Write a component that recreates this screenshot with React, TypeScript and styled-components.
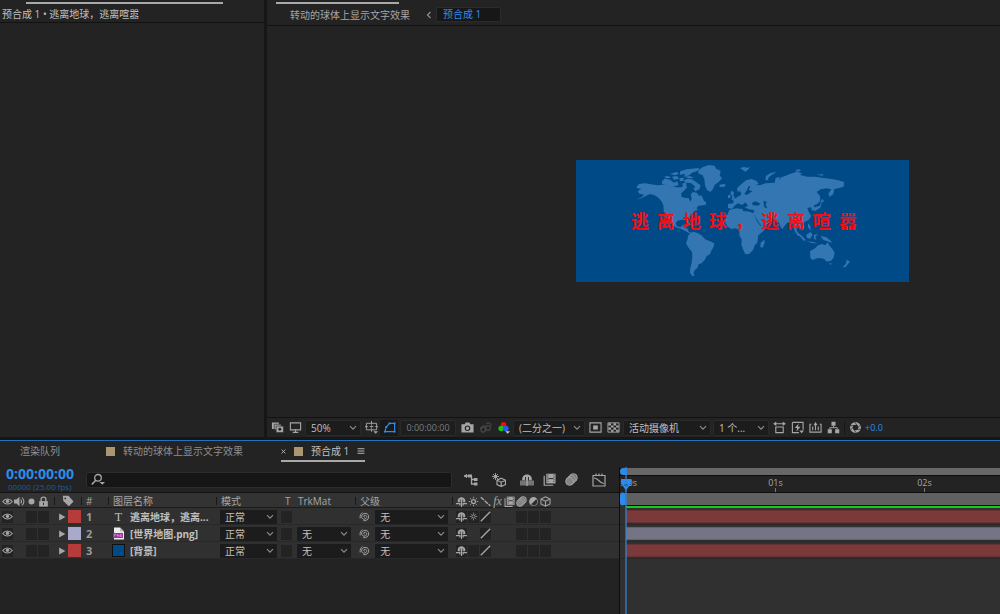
import React from "react";
import styled, { createGlobalStyle, css } from "styled-components";

const c = {
  gutter: "#161616",
  panel: "#232323",
  row: "#303030",
  header: "#333333",
  field: "#1c1c1c",
  line: "#121212",
  text: "#a6a6a6",
  bright: "#c0c0c0",
  dim: "#7d7d7d",
  blue: "#2d8ceb",
};

const Global = createGlobalStyle`
  *, *::before, *::after { box-sizing: border-box; }
  body {
    margin: 0;
    background: ${c.gutter};
    color: ${c.text};
    font: 10px/14px "Open Sans", "Noto Sans CJK SC", sans-serif;
  }
  button, input, select { font: inherit; color: inherit; margin: 0; }
`;

/* ---------- shell ---------- */

const Workspace = styled.div`
  display: flex;
  flex-direction: column;
  min-height: 100vh;
`;

const Upper = styled.div`
  display: flex;
  flex: 1;
  gap: 3px;
  min-height: 320px;
  padding-bottom: 3px;
`;

const Panel = styled.section<{ $width?: number }>`
  display: flex;
  flex-direction: column;
  min-width: 0;
  background: ${c.panel};
  ${(p) => (p.$width ? css`flex: 0 0 ${p.$width}px;` : css`flex: 1;`)}
`;

const Strip = styled.div<{ $start: number; $width: number }>`
  width: ${(p) => p.$width}px;
  height: 2px;
  margin: 2px 0 0 ${(p) => p.$start}px;
  background: #a9a9a9;
`;

const PanelTitle = styled.h2`
  margin: 0;
  padding: 3px 2px 1px;
  border-bottom: 1px solid ${c.line};
  color: ${c.bright};
  font-size: 10px;
  font-weight: 400;
  line-height: 14px;
`;

const Crumbs = styled.nav`
  display: flex;
  align-items: center;
  gap: 4px;
  height: 22px;
  padding: 0 23px;
  border-bottom: 1px solid ${c.line};
  font-size: 10px;
`;

const Crumb = styled.a<{ $current?: boolean }>`
  width: 132px;
  color: ${c.text};
  text-decoration: none;
  ${(p) =>
    p.$current &&
    css`
      width: 65px;
      padding: 0 6px;
      border: 1px solid #2b2b2b;
      border-radius: 2px;
      background: #171717;
      color: ${c.blue};
      line-height: 13px;
    `}
`;

/* ---------- composition viewer ---------- */

const Stage = styled.div`
  display: flex;
  flex: 1;
  align-items: center;
  justify-content: flex-end;
  padding: 0 91px 1px 0;
`;

const Comp = styled.div`
  display: grid;
  width: 333px;
  background: #004a87;
  > * { grid-area: 1 / 1; }
`;

const MapArt = styled.svg`
  display: block;
  width: 100%;
  fill: #3476b2;
`;

const Slogan = styled.p`
  display: flex;
  gap: 8px;
  align-self: center;
  margin: 0;
  padding: 0 0 2px 55px;
  color: #ee1218;
  font: 700 18px/20px "Noto Sans CJK SC", sans-serif;
`;

const ViewerBar = styled.div`
  display: flex;
  align-items: center;
  height: 20px;
  padding-left: 1px;
  border-top: 1px solid ${c.line};
`;

const ToolButton = styled.button<{ $tone?: "active" | "faint" }>`
  display: grid;
  place-items: center;
  flex: none;
  width: 18px;
  height: 16px;
  padding: 0;
  border: 0;
  border-radius: 2px;
  background: ${(p) => (p.$tone === "active" ? "#191919" : "none")};
  color: ${(p) => (p.$tone === "active" ? c.blue : p.$tone === "faint" ? "#474747" : c.text)};
`;

const TimeField = styled.button`
  width: 56px;
  height: 16px;
  margin: 0 2px;
  padding: 0;
  border: 1px solid #2a2a2a;
  border-radius: 2px;
  background: #1e1e1e;
  color: ${c.dim};
  font-size: 9px;
  line-height: 14px;
`;

const Exposure = styled.button`
  padding: 0 1px;
  border: 0;
  background: none;
  color: ${c.blue};
  font-size: 9px;
`;

const BarRule = styled.span`
  width: 1px;
  height: 14px;
  margin: 0 1px 0 2px;
  background: #171717;
`;

/* ---------- drop-downs ---------- */

const PickBox = styled.span<{ $width: number; $flat?: boolean }>`
  display: inline-grid;
  flex: none;
  align-items: center;
  width: ${(p) => p.$width}px;
  height: ${(p) => (p.$flat ? 14 : 16)}px;
  margin: ${(p) => (p.$flat ? 0 : "0 1px")};
  border: ${(p) => (p.$flat ? 0 : "1px solid #2a2a2a")};
  border-radius: ${(p) => (p.$flat ? 0 : 2)}px;
  background: ${c.field};
  vertical-align: top;
  > * { grid-area: 1 / 1; }
  svg { justify-self: end; margin-right: 3px; pointer-events: none; }
`;

const PickSelect = styled.select`
  width: 100%;
  height: 14px;
  padding: 0 12px 0 5px;
  border: 0;
  background: none;
  color: ${c.bright};
  font-size: 10px;
  line-height: 14px;
  appearance: none;
  outline: none;
  option { background: ${c.field}; }
`;

function Pick({ label, value, width, flat }: { label: string; value: string; width: number; flat?: boolean }) {
  return (
    <PickBox $width={width} $flat={flat}>
      <PickSelect aria-label={label} defaultValue={value}>
        <option>{value}</option>
      </PickSelect>
      <svg width="8" height="6" viewBox="0 0 8 6" fill="none" stroke="#8c8c8c" strokeWidth="1.2">
        <path d="M1 1.2 4 4.2 7 1.2" />
      </svg>
    </PickBox>
  );
}

/* ---------- icons ---------- */

const glyphs: Record<string, React.ReactNode> = {
  layers: (
    <>
      <path d="M1 1.500h7.500v3H4.500v4H1z" fill="currentColor" stroke="none" />
      <path d="M3.500 3.500h7.500v6h-7.500z" fill="currentColor" stroke="#232323" strokeWidth=".7" />
      <path d="M5.500 5.500h8v7h-8z" fill="currentColor" stroke="#232323" strokeWidth=".7" />
      <circle cx="9.500" cy="9" r="1.600" fill="#232323" stroke="none" />
    </>
  ),
  monitor: (
    <>
      <path d="M1.500 2h11v7.500h-11z" strokeWidth="1.200" />
      <path d="M7 9v2.500M4 12.200h6" strokeWidth="1.200" />
    </>
  ),
  guides: (
    <>
      <path d="M1.500 2.500h11v7h-11zM7 0v4M7 8v3.500M0 6h3M11 6h3M5 6h4M7 4.800v2.400" />
      <path d="M9 11h5L11.500 13.800z" fill="currentColor" stroke="none" />
    </>
  ),
  mask: (
    <>
      <path d="M2 11.500 3.500 6.500 7 2.500h5.500v9z" strokeWidth="1.200" />
      <path d="M1 10.500h2v2H1zM11.500 10.500h2v2h-2zM11.500 1.500h2v2h-2zM6 1.500h2v2H6zM2.500 5.500h2v2h-2z" fill="currentColor" stroke="none" />
    </>
  ),
  camera: (
    <>
      <path d="M.5 3.500h3.500l1-2h4l1 2h3.500v9H.5z" fill="currentColor" stroke="none" />
      <circle cx="7" cy="7.800" r="2.400" fill="none" stroke="#232323" strokeWidth="1.200" />
    </>
  ),
  snapshot: (
    <>
      <path d="M1.500 9C2 5.500 5 4.500 8 6M8 3c2-2 5-1 5 2" strokeWidth="1.300" />
      <circle cx="4.500" cy="9.500" r="2.500" strokeWidth="1.300" />
      <circle cx="9.800" cy="7.500" r="2.500" strokeWidth="1.300" />
    </>
  ),
  rgb: (
    <>
      <circle cx="7" cy="4" r="3" fill="#f20c0c" stroke="none" />
      <circle cx="4.500" cy="8" r="3" fill="#12c712" stroke="none" />
      <circle cx="9.500" cy="8" r="3" fill="#2a5cf5" stroke="none" />
      <path d="M9 11h5L11.500 13.800z" fill="#c8c8c8" stroke="none" />
    </>
  ),
  region: (
    <>
      <path d="M1 2h12v10H1z" strokeWidth="1.200" />
      <path d="M4.500 4.800h5v4.400h-5z" fill="currentColor" stroke="none" />
    </>
  ),
  checker: (
    <>
      <path d="M1 2h12v10H1z" />
      <path d="M1.500 2.500h2.800v2.300H1.500zM7 2.500h2.800v2.300H7zM4.300 4.800H7v2.300H4.300zM9.800 4.800h2.700v2.300H9.800zM1.500 7.100h2.800v2.300H1.500zM7 7.100h2.800v2.300H7zM4.300 9.400H7v2.300H4.300zM9.800 9.400h2.700v2.300H9.800z" fill="currentColor" stroke="none" />
    </>
  ),
  aspect: (
    <>
      <path d="M1 3h12M3 6.500h8v6H3z" strokeWidth="1.200" />
      <path d="M3.500.5v5L.3 3zM10.500.5v5L13.700 3z" fill="currentColor" stroke="none" />
    </>
  ),
  fast: (
    <>
      <path d="M1.500 1.500h11.500v8M8.500 12.500h-7v-11" strokeWidth="1.200" />
      <path d="M8.300 2.800 4 7.500h2.500L6 11.200 10.200 6.200H7.500zM9 10.300h5L11.500 13.200z" fill="currentColor" stroke="none" />
    </>
  ),
  chart: (
    <>
      <path d="M2.500 3.500H1v8.500h12V3.500h-1.500M4 6v4M10 6v4M7 2v8" strokeWidth="1.200" />
      <path d="M4.800 4.500 7 1 9.200 4.500z" fill="currentColor" stroke="none" />
    </>
  ),
  flow: (
    <>
      <path d="M4.800.8h4.400v4.400H4.800zM.8 8.800h4.400v4.400H.8zM8.800 8.800h4.400v4.400H8.800z" fill="currentColor" stroke="none" />
      <path d="M7 5v2.200M3 9V7.200h8V9" />
    </>
  ),
  aperture: (
    <>
      <circle cx="7" cy="7" r="4.400" strokeWidth="3" />
      <path d="M6 1 9 5M12.500 4 9 8M13 9H7.500M8 13 5 9M1.500 10 5 6M1 5h5.500" stroke="#232323" strokeWidth=".8" />
    </>
  ),
  eye: (
    <>
      <path d="M1 7C4 2.800 10 2.800 13 7 10 11.200 4 11.200 1 7z" strokeWidth="1.500" />
      <circle cx="7" cy="6.800" r="2.200" fill="currentColor" stroke="none" />
    </>
  ),
  speaker: (
    <>
      <path d="M0 4.500h3L7 1v12L3 9.500H0z" fill="currentColor" stroke="none" />
      <path d="M8.500 4.500c1.500 1.500 1.500 3.500 0 5M10 2c3.500 2.500 3.500 7.500 0 10" strokeWidth="1.300" />
    </>
  ),
  dot: <circle cx="7" cy="7" r="3.800" fill="currentColor" stroke="none" />,
  lock: (
    <>
      <path d="M1.500 6.500h11V13.500h-11z" fill="currentColor" stroke="none" />
      <path d="M4 7V4c0-3.400 6-3.400 6 0v3" strokeWidth="1.700" />
      <path d="M7 8.500v3" stroke="#333" strokeWidth="1.300" />
    </>
  ),
  tag: (
    <>
      <path d="M1 1h6.500l6 6.500-5.500 5.500L1.500 7z" fill="currentColor" stroke="none" />
      <circle cx="3.800" cy="4" r="1" fill="#333" stroke="none" />
    </>
  ),
  shy: (
    <>
      <path d="M2.200 8V6C2.200 0 11.800 0 11.800 6v2z" fill="currentColor" stroke="none" />
      <path d="M0 9.800h5V12M14 9.800h-5V12" strokeWidth="1.600" />
      <path d="M7 3v11" strokeWidth="1.400" />
      <path d="M5.500 4.500V9M8.500 4.500V9" stroke="#2c2c2c" strokeWidth=".9" />
    </>
  ),
  sun: (
    <>
      <circle cx="7" cy="7" r="2.500" strokeWidth="1.500" />
      <path d="M7 1v2M7 11v2M1 7h2M11 7h2M2.800 2.800l1.400 1.400M9.800 9.800l1.400 1.400M11.200 2.800 9.800 4.200M4.200 9.800l-1.400 1.400" strokeWidth="1.200" />
    </>
  ),
  backslash: <path d="M1 1.500 13 12.500" strokeWidth="1.800" strokeDasharray="5.500 1.200" />,
  slash: <path d="M1 13 13 1" strokeWidth="1.700" />,
  film: (
    <>
      <path d="M3.500.8H13.500v10.400H3.500z" fill="currentColor" stroke="none" />
      <path d="M1.300 3v10.200h9.700" strokeWidth="1.300" />
      <path d="M5.200 1.500v9M11.800 1.500v9" stroke="#333" strokeDasharray="1.300 1" />
      <path d="M6 6h5" stroke="#333" strokeWidth="1.200" />
    </>
  ),
  blur: (
    <>
      <circle cx="9" cy="5" r="4.300" fill="#777" />
      <circle cx="7" cy="7" r="4.300" fill="#777" />
      <circle cx="5" cy="9" r="4.300" fill="#858585" />
    </>
  ),
  half: (
    <>
      <circle cx="7" cy="7" r="5.600" fill="currentColor" stroke="none" />
      <path d="M4 10.500 10.500 4A4.600 4.600 0 0 1 4 10.500z" fill="#2c2c2c" stroke="none" />
    </>
  ),
  cube: <path d="M7 1 12.800 3.800v6.400L7 13 1.200 10.200V3.800zM1.200 3.800 7 6.500l5.800-2.700M7 6.500V13" strokeWidth="1.300" />,
  swirl: <path d="M7.500 7.500c-1.500.8-2.300-1.300-.5-2 2.500-.8 4 2.500 1.800 4.200C5.500 12 2 8.500 3.800 5.200 6 1.500 12.800 2.500 12.300 7.800 12 11 9 13 5.500 12.300M1.500 9.500C.8 6 2.500 3 4.500 2" strokeWidth="1.200" />,
  mini: (
    <>
      <path d="M0 3h7.500M7.500 3v8h3M7.500 6.500h3" strokeWidth="1.300" />
      <path d="M4 1.500h4v3H4zM10 5h3.500v3H10zM10 9.500h3.500v3H10zM0 3 3 .8v4.400z" fill="currentColor" stroke="none" />
    </>
  ),
  draft: (
    <>
      <path d="M9.200 5.200 13.500 7.200v4.300L9.200 13.500 5 11.500V7.200zM5 7.200 9.200 9.200l4.300-2M9.200 9.200v4.300" strokeWidth="1.200" />
      <path d="M3.500 0v7M0 3.500h7M1 1l5 5M6 1 1 6" strokeWidth=".9" />
      <circle cx="3.500" cy="3.500" r="1.700" fill="currentColor" stroke="none" />
    </>
  ),
  hideShy: (
    <>
      <path d="M2.200 7.500V6C2.200 0 11.800 0 11.800 6v1.500z" fill="currentColor" stroke="none" />
      <path d="M0 7.500h14v5H0z" fill="#747474" stroke="none" />
      <path d="M7 3v10" strokeWidth="1.400" />
      <path d="M5.500 4v3.500M8.500 4v3.500" stroke="#232323" strokeWidth=".9" />
    </>
  ),
  graph: (
    <>
      <path d="M1 2.500h12v10.500H1z" strokeWidth="1.200" />
      <path d="M2 5c5 0 5 5.500 10 5.500M4 .5v2M7 .5v2M10 .5v2" strokeWidth="1.200" />
    </>
  ),
  menu: <path d="M1 3h12M1 7h12M1 11h12" strokeWidth="1.600" />,
  close: <path d="M1.500 1.500 12.500 12.500M12.500 1.500 1.500 12.500" strokeWidth="2.400" />,
  search: (
    <>
      <circle cx="7" cy="4.800" r="3.300" strokeWidth="1.300" />
      <path d="M4.800 7.200.8 11.500" strokeWidth="1.600" />
      <path d="M8.500 9h5.500l-2.700 2.800z" fill="currentColor" stroke="none" />
    </>
  ),
  triangle: <path d="M2 1v12L13 7z" fill="currentColor" stroke="none" />,
};

function Icon({ name, size = 13 }: { name: string; size?: number }) {
  return (
    <svg width={size} height={size} viewBox="0 0 14 14" fill="none" stroke="currentColor" strokeWidth="1" aria-hidden="true">
      {glyphs[name]}
    </svg>
  );
}

/* ---------- timeline ---------- */

const Timeline = styled.section`
  display: flex;
  flex-direction: column;
  flex: none;
  border-top: 1px solid #2272bf;
  background: ${c.panel};
`;

const Tabs = styled.div`
  display: flex;
  align-items: flex-start;
  height: 26px;
  padding-left: 20px;
`;

const Tab = styled.button<{ $active?: boolean; $gap?: number }>`
  display: flex;
  align-items: center;
  gap: 8px;
  height: 21px;
  margin-left: ${(p) => p.$gap || 0}px;
  padding: 1px 0 0;
  border: 0;
  border-bottom: 2px solid ${(p) => (p.$active ? "#a9a9a9" : "transparent")};
  background: none;
  color: ${(p) => (p.$active ? c.bright : "#8f8f8f")};
`;

const Chip = styled.span`
  width: 9px;
  height: 9px;
  background: #ab9674;
`;

const Body = styled.div`
  display: flex;
  align-items: stretch;
`;

const LayerSide = styled.div`
  flex: 0 0 620px;
  border-right: 1px solid #0e0e0e;
`;

const Tools = styled.div`
  display: flex;
  align-items: center;
  height: 26px;
  padding-left: 6px;
  border-bottom: 1px solid ${c.line};
`;

const Clock = styled.div`
  width: 80px;
  padding-bottom: 2px;
  color: ${c.blue};
  font-size: 14px;
  font-weight: 700;
  line-height: 15px;
  white-space: nowrap;
  small {
    display: block;
    padding-left: 2px;
    color: #1d5c9b;
    font-size: 8px;
    font-weight: 400;
    line-height: 11px;
  }
`;

const Search = styled.label`
  display: flex;
  align-items: center;
  gap: 4px;
  width: 366px;
  height: 16px;
  padding-left: 4px;
  border: 1px solid #2b2b2b;
  border-radius: 2px;
  background: #161616;
  input {
    flex: 1;
    min-width: 0;
    padding: 0;
    border: 0;
    outline: 0;
    background: none;
  }
`;

const ToolSet = styled.div`
  display: flex;
  align-items: center;
  gap: 10px;
  padding-left: 10px;
`;

const ToolGroup = styled.div`
  display: flex;
  gap: 4px;
`;

const Grid = styled.table`
  width: 619px;
  border-collapse: collapse;
  table-layout: fixed;
`;

const Head = styled.th<{ $rule?: boolean }>`
  height: 15px;
  padding: 0;
  background: ${c.header};
  color: ${c.text};
  font-size: 10px;
  font-weight: 400;
  line-height: 14px;
  text-align: left;
  white-space: nowrap;
  box-shadow: inset 0 -1px #1b1b1b;
  > div {
    display: flex;
    align-items: center;
    height: 15px;
    padding: 1px 0 0 5px;
    background: ${(p) => (p.$rule ? "linear-gradient(#181818, #181818) 0 4px / 1px 8px no-repeat" : "none")};
  }
`;

const Cell = styled.td`
  height: 17px;
  padding: 0;
  background: ${c.row};
  box-shadow: inset 0 -1px #282828;
  > div {
    display: flex;
    align-items: center;
    height: 17px;
    padding-left: 4px;
    white-space: nowrap;
  }
`;

const Slots = styled.div<{ $start: number }>`
  && { padding-left: ${(p) => p.$start}px; }
`;

const Slot = styled.button<{ $well?: boolean }>`
  display: grid;
  place-items: center;
  width: 12px;
  height: 12px;
  padding: 0;
  border: 0;
  border-right: 1px solid transparent;
  background: ${(p) => (p.$well ? "#232323" : "none")};
  background-clip: padding-box;
  color: ${c.text};
`;

const LabelWell = styled.div`
  && { gap: 2px; }
`;

const Swatch = styled.span<{ $color: string; $outlined?: boolean }>`
  flex: none;
  width: 13px;
  height: 13px;
  border: 1px solid ${(p) => (p.$outlined ? "#111" : p.$color)};
  background: ${(p) => p.$color};
`;

const Num = styled.b`
  padding-left: 1px;
  color: #9a9a9a;
  font-size: 11px;
`;

const Name = styled.b`
  overflow: hidden;
  color: ${c.bright};
  font-size: 10px;
`;

const TypeMark = styled.span`
  display: grid;
  place-items: center;
  flex: none;
  width: 13px;
  margin-right: 5px;
  color: ${c.bright};
  font: 12px/14px "Liberation Serif", serif;
`;

const Fx = styled.i`
  font: italic 12px/12px "Liberation Serif", serif;
`;

/* ---------- time side ---------- */

const TimeSide = styled.div`
  position: relative;
  flex: 1;
  min-width: 0;
  min-height: 147px;
  overflow: hidden;
  background: ${c.row};
`;

const Navigator = styled.div`
  height: 9px;
  padding-top: 1px;
  border-bottom: 1px solid #0e0e0e;
  background: ${c.panel};
`;

const NavBar = styled.div`
  height: 7px;
  border-left: 7px solid ${c.blue};
  border-radius: 4px 0 0 4px;
  background: #686868;
`;

const Ruler = styled.ol`
  display: flex;
  height: 16px;
  margin: 0;
  padding: 0;
  background: ${c.panel};
  list-style: none;
`;

const Mark = styled.li<{ $first?: boolean }>`
  flex: 0 0 ${(p) => (p.$first ? 81 : 149)}px;
  font-size: 9px;
  line-height: 13px;
  text-align: ${(p) => (p.$first ? "left" : "center")};
  background: ${(p) => (p.$first ? "none" : "linear-gradient(#777, #777) 50% 100% / 1px 4px no-repeat")};
`;

const WorkArea = styled.div`
  height: 14px;
  border-top: 1px solid #0e0e0e;
  border-bottom: 1px solid #0e0e0e;
  border-left: 5px solid ${c.blue};
  border-radius: 4px 0 0 4px;
  background: #606060;
`;

const Cached = styled.div`
  height: 2px;
  margin-left: 6px;
  background: #14c81e;
`;

const Track = styled.div`
  height: 17px;
  padding: 2px 0 1px 6px;
  border-bottom: 1px solid #282828;
`;

const Clip = styled.div<{ $color: string }>`
  height: 13px;
  border: solid rgba(0, 0, 0, 0.15);
  border-width: 1px 0;
  background: ${(p) => p.$color};
`;

const Playhead = styled.svg`
  position: absolute;
  top: 0;
  left: 0;
  width: 12px;
  height: 100%;
`;

type Layer = {
  name: string;
  kind: "text" | "png" | "solid";
  label: string;
  clip: string;
  matte: boolean;
  sun: "icon" | "none" | "well";
};

const layers: Layer[] = [
  { name: "逃离地球，逃离...", kind: "text", label: "#b63b3b", clip: "#7b3a3a", matte: false, sun: "icon" },
  { name: "[世界地图.png]", kind: "png", label: "#a9a9cc", clip: "#747484", matte: true, sun: "none" },
  { name: "[背景]", kind: "solid", label: "#b63b3b", clip: "#7b3a3a", matte: true, sun: "well" },
];

function LayerMark({ kind }: { kind: Layer["kind"] }) {
  if (kind === "text") return <TypeMark>T</TypeMark>;
  if (kind === "solid")
    return (
      <TypeMark>
        <Swatch $color="#004a87" $outlined />
      </TypeMark>
    );
  return (
    <TypeMark>
      <svg width="13" height="13" viewBox="0 0 13 13" aria-hidden="true">
        <path d="M2 0.500h6l4 4v8H2z" fill="#eee" />
        <path d="M8 .5v4h4z" fill="#bbb" />
        <path d="M1 6h10v5H1z" fill="#9c2b9c" />
        <path d="M2.500 9.500v-2h1.500v1M5.500 9.500v-2l1.500 2v-2M9.800 7.500H8.500v2h1.300v-1" stroke="#e3b6e3" strokeWidth=".6" fill="none" />
      </svg>
    </TypeMark>
  );
}

const headSwitches = ["shy", "sun", "backslash", "fx", "film", "blur", "half", "cube"];

function LayerTable() {
  return (
    <Grid>
      <colgroup>
        {[54, 27, 27, 108, 64, 13, 62, 97, 167].map((w, i) => (
          <col key={i} width={w} />
        ))}
      </colgroup>
      <thead>
        <tr>
          <Head>
            <Slots $start={2}>
              {["eye", "speaker", "dot", "lock"].map((n) => (
                <Slot key={n} aria-label={n}>
                  <Icon name={n} size={11} />
                </Slot>
              ))}
            </Slots>
          </Head>
          <Head $rule>
            <div>
              <ToolButton as="span">
                <Icon name="tag" size={12} />
              </ToolButton>
            </div>
          </Head>
          <Head $rule><div>#</div></Head>
          <Head $rule><div>图层名称</div></Head>
          <Head $rule><div>模式</div></Head>
          <Head><div>T</div></Head>
          <Head><div>TrkMat</div></Head>
          <Head $rule><div>父级</div></Head>
          <Head $rule>
            <Slots $start={4}>
              {headSwitches.map((n) => (
                <Slot key={n} aria-label={n}>
                  {n === "fx" ? <Fx>fx</Fx> : <Icon name={n} size={11} />}
                </Slot>
              ))}
            </Slots>
          </Head>
        </tr>
      </thead>
      <tbody>
        {layers.map((l, i) => (
          <tr key={l.name}>
            <Cell>
              <Slots $start={2}>
                <Slot $well aria-label="可见"><Icon name="eye" size={11} /></Slot>
                <Slot aria-label="音频" />
                <Slot $well aria-label="独奏" />
                <Slot $well aria-label="锁定" />
              </Slots>
            </Cell>
            <Cell>
              <LabelWell>
                <Icon name="triangle" size={8} />
                <Swatch $color={l.label} />
              </LabelWell>
            </Cell>
            <Cell><div><Num>{i + 1}</Num></div></Cell>
            <Cell>
              <div>
                <LayerMark kind={l.kind} />
                <Name>{l.name}</Name>
              </div>
            </Cell>
            <Cell><div><Pick flat label="模式" value="正常" width={57} /></div></Cell>
            <Cell><Slots $start={1}><Slot $well aria-label="保留透明度" /></Slots></Cell>
            <Cell><div>{l.matte && <Pick flat label="轨道遮罩" value="无" width={54} />}</div></Cell>
            <Cell>
              <div>
                <Icon name="swirl" size={11} />
                <span>&nbsp;&nbsp;</span>
                <Pick flat label="父级" value="无" width={73} />
              </div>
            </Cell>
            <Cell>
              <Slots $start={4}>
                <Slot $well aria-label="消隐"><Icon name="shy" size={11} /></Slot>
                <Slot $well={l.sun !== "none"} aria-label="折叠变换">
                  {l.sun === "icon" && <Icon name="sun" size={9} />}
                </Slot>
                <Slot $well aria-label="质量"><Icon name="slash" size={11} /></Slot>
                <Slot aria-label="效果" />
                <Slot aria-label="帧混合开关" />
                <Slot $well aria-label="运动模糊" />
                <Slot $well aria-label="调整图层" />
                <Slot $well aria-label="3D 图层" />
              </Slots>
            </Cell>
          </tr>
        ))}
      </tbody>
    </Grid>
  );
}

/* ---------- world map ---------- */

function WorldMap() {
  return (
    <MapArt viewBox="18 16 999 366" role="img" aria-label="世界地图">
      <path d="M200 96 207 88 225 86 238 88 262 92 280 90 300 94 318 98 335 98 343 88 352 98 342 108 334 116 334 126 346 130 356 130 361 141 365 132 362 120 368 112 380 114 388 124 394 122 403 140 408 150 398 152 386 153 379 160 384 165 372 170 366 180 358 188 354 194 357 207 351 207 345 196 334 195 322 199 317 206 321 215 331 218 338 211 348 208 345 219 353 222 356 231 363 233 358 236 346 229 332 222 318 218 306 209 299 194 291 182 295 197 288 188 281 170 280 152 276 142 266 130 254 122 240 118 229 123 214 131 199 135 216 127 222 120 208 117 203 109 214 103 200 100z" />
      <path d="M362 234 371 231 384 236 396 243 405 254 420 260 433 266 431 276 424 288 420 299 410 304 404 316 395 326 386 329 382 340 375 345 370 355 374 363 367 364 360 354 361 340 365 324 367 306 366 292 356 280 348 266 353 252 355 242z" />
      <path d="M386 46 399 37 416 31 434 33 439 43 452 48 449 62 456 71 446 82 434 91 429 103 421 112 411 106 405 92 403 74 398 62 384 56z" />
      <path d="M276 80 284 72 300 75 312 84 322 80 326 91 310 96 292 93 276 88zM282 66 296 64 302 70 288 71zM306 66 322 64 326 72 312 75zM330 50 350 44 388 40 384 48 366 54 358 62 342 66 346 58 330 60zM328 70 342 69 340 78 330 80zM340 78 352 72 366 74 378 82 392 92 388 104 376 110 370 102 376 96 364 86 350 84zM300 58 318 52 328 56 316 62zM344 66 360 64 372 70 356 71zM336 88 348 82 350 92 342 96zM400 140 408 141 408 149 398 147z" />
      <path d="M448 90 464 88 468 93 458 98 449 96zM510 40 522 37 532 39 540 38 534 45 526 51 518 46zM485 108 492 113 490 122 495 130 484 134 487 125 481 116zM474 122 482 120 481 129 474 131z" />
      <path fillRule="evenodd" d="M474 148 490 146 491 138 484 134 496 131 506 125 514 120 512 110 503 111 501 101 512 90 528 77 545 73 560 79 566 88 556 92 572 91 586 86 600 85 614 84 617 70 630 66 626 76 634 68 645 64 662 57 680 51 696 56 690 61 712 66 735 66 760 70 785 73 805 77 822 82 821 96 808 100 793 103 790 118 779 127 775 117 784 104 770 101 752 104 740 112 750 124 751 138 742 148 732 152 733 166 726 168 724 158 712 160 716 172 724 184 716 196 702 203 696 205 703 218 694 227 685 217 680 214 680 228 690 243 684 244 674 229 670 212 660 202 650 206 641 217 637 224 630 214 625 199 616 193 600 190 606 196 592 209 576 217 568 206 558 190 550 176 553 166 536 164 524 158 534 154 526 143 517 151 503 146 493 154 486 163 474 160zM546 144 556 140 572 147 564 153 548 152zM580 138 590 141 587 150 592 161 583 158zM529 110 536 94 541 95 536 106 548 110 540 114 532 120 522 119z" />
      <path d="M478 166 498 161 517 163 520 170 532 170 550 175 560 198 571 214 588 214 581 228 565 242 562 264 554 272 549 287 537 298 526 299 520 286 514 270 515 254 508 242 508 230 498 221 484 223 473 216 466 204 468 190zM572 264 583 255 584 264 578 279 571 277z" />
      <path d="M720 290 736 280 742 273 755 268 766 272 773 263 779 274 788 284 794 294 791 309 783 318 770 321 762 312 744 310 728 316 721 310zM778 325 785 326 781 332zM830 315 840 321 834 328 826 338 818 337 828 327z" />
      <path d="M682 232 696 244 708 257 701 258 688 243zM709 240 722 232 728 240 720 252 711 250zM708 260 730 262 742 266 728 266zM732 240 744 239 736 246 739 256 732 252zM752 244 768 247 782 258 786 265 772 260 760 256zM714 206 721 214 722 228 714 218zM727 163 735 170 752 158 755 143 763 140 756 133 752 142 750 153 734 158zM730 178 736 182 730 186zM586 76 588 64 602 55 620 52 606 60 596 68 594 77zM676 46 690 44 692 49 680 51zM740 60 760 58 758 63zM344 202 362 207 374 213 363 212z" />
    </MapArt>
  );
}

const TITLE = "逃离地球，逃离喧嚣";

export default function App() {
  return (
    <Workspace>
      <Global />
      <Upper>
        <Panel $width={264}>
          <Strip $start={26} $width={197} />
          <PanelTitle>预合成 1 • {TITLE}</PanelTitle>
        </Panel>
        <Panel>
          <Strip $start={9} $width={123} />
          <Crumbs>
            <Crumb href="#main">转动的球体上显示文字效果</Crumb>
            <svg width="6" height="8" viewBox="0 0 6 8" fill="none" stroke="#8f8f8f" strokeWidth="1.2">
              <path d="M4.500 1 1.500 4 4.500 7" />
            </svg>
            <Crumb href="#pre" $current>预合成 1</Crumb>
          </Crumbs>
          <Stage>
            <Comp>
              <WorldMap />
              <Slogan>
                {TITLE.split("").map((ch, i) => (
                  <span key={i}>{ch}</span>
                ))}
              </Slogan>
            </Comp>
          </Stage>
          <ViewerBar>
            <ToolButton aria-label="始终预览"><Icon name="layers" /></ToolButton>
            <ToolButton aria-label="主查看器"><Icon name="monitor" /></ToolButton>
            <Pick label="放大率" value="50%" width={56} />
            <ToolButton aria-label="网格和参考线"><Icon name="guides" /></ToolButton>
            <ToolButton aria-label="蒙版可见性" $tone="active"><Icon name="mask" /></ToolButton>
            <TimeField>0:00:00:00</TimeField>
            <ToolButton aria-label="拍摄快照"><Icon name="camera" /></ToolButton>
            <ToolButton aria-label="显示快照" $tone="faint"><Icon name="snapshot" /></ToolButton>
            <ToolButton aria-label="通道"><Icon name="rgb" /></ToolButton>
            <Pick label="分辨率" value="(二分之一)" width={72} />
            <ToolButton aria-label="目标区域"><Icon name="region" /></ToolButton>
            <ToolButton aria-label="透明网格"><Icon name="checker" /></ToolButton>
            <Pick label="3D 视图" value="活动摄像机" width={88} />
            <Pick label="视图布局" value="1 个..." width={56} />
            <ToolButton aria-label="像素长宽比"><Icon name="aspect" /></ToolButton>
            <ToolButton aria-label="快速预览"><Icon name="fast" /></ToolButton>
            <ToolButton aria-label="时间轴"><Icon name="chart" /></ToolButton>
            <ToolButton aria-label="流程图"><Icon name="flow" /></ToolButton>
            <BarRule />
            <ToolButton aria-label="重置曝光度"><Icon name="aperture" /></ToolButton>
            <Exposure>+0.0</Exposure>
          </ViewerBar>
        </Panel>
      </Upper>

      <Timeline>
        <Tabs>
          <Tab>渲染队列</Tab>
          <Tab $gap={46}><Chip />转动的球体上显示文字效果</Tab>
          <Tab $active $gap={38}>
            <Icon name="close" size={5} />
            <Chip />
            预合成 1
            <Icon name="menu" size={8} />
          </Tab>
        </Tabs>
        <Body>
          <LayerSide>
            <Tools>
              <Clock>
                0:00:00:00
                <small>00000 (25.00 fps)</small>
              </Clock>
              <Search>
                <Icon name="search" size={14} />
                <input type="text" aria-label="搜索图层" />
              </Search>
              <ToolSet>
                <ToolButton aria-label="合成微型流程图"><Icon name="mini" size={14} /></ToolButton>
                <ToolButton aria-label="草图 3D"><Icon name="draft" size={14} /></ToolButton>
                <ToolGroup>
                  <ToolButton aria-label="隐藏消隐图层"><Icon name="hideShy" size={14} /></ToolButton>
                  <ToolButton aria-label="帧混合"><Icon name="film" /></ToolButton>
                  <ToolButton aria-label="启用运动模糊"><Icon name="blur" /></ToolButton>
                </ToolGroup>
                <ToolButton aria-label="图表编辑器"><Icon name="graph" size={14} /></ToolButton>
              </ToolSet>
            </Tools>
            <LayerTable />
          </LayerSide>
          <TimeSide>
            <Navigator><NavBar /></Navigator>
            <Ruler>
              <Mark $first>:00s</Mark>
              <Mark>01s</Mark>
              <Mark>02s</Mark>
            </Ruler>
            <WorkArea />
            <Cached />
            {layers.map((l) => (
              <Track key={l.name}>
                <Clip $color={l.clip} />
              </Track>
            ))}
            <Playhead aria-hidden="true">
              <path d="M1 12h10v4.500l-5 7-5-7z" fill={c.blue} />
              <path d="M6 0v600" stroke="#3583cf" strokeWidth="1.300" />
              <path d="M4 18h4" stroke="#1a4f86" />
            </Playhead>
          </TimeSide>
        </Body>
      </Timeline>
    </Workspace>
  );
}
